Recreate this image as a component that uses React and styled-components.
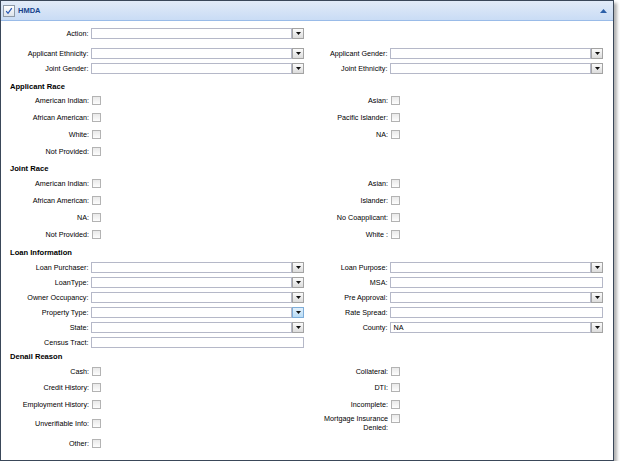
import React from 'react'
import styled, { createGlobalStyle } from 'styled-components'

const GlobalStyle = createGlobalStyle`
  html, body {
    margin: 0;
    padding: 0;
    background: #ffffff;
  }
  body {
    font-family: "Liberation Sans", Arial, sans-serif;
  }
`

const Panel = styled.section`
  width: 612px;
  border: 1px solid #3a4759;
  box-shadow: 3px 3px 3px rgba(0, 0, 0, 0.3);
  background: #fff;
`

const Header = styled.header`
  height: 19px;
  display: flex;
  align-items: center;
  padding: 0 6px 0 2px;
  background: linear-gradient(#e2ebf8, #c9dcf5);
  border-bottom: 1px solid #99bbe8;
`

const HeaderCheck = styled.span`
  width: 12px;
  height: 12px;
  box-sizing: border-box;
  border: 1px solid #8e9aa8;
  background: linear-gradient(#ffffff, #dde3ea);
  display: flex;
  align-items: center;
  justify-content: center;
  margin-right: 3px;
`

const Title = styled.span`
  flex: 1;
  font-size: 7.5px;
  font-weight: bold;
  color: #15428b;
`

const Body = styled.div`
  padding: 5px 0 8px 4px;
`

const Row = styled.div`
  display: grid;
  grid-template-columns: 299px 299px;
  height: ${(p) => p.h || 15}px;
  margin-top: ${(p) => p.mt || 0}px;
`

const Field = styled.div`
  display: flex;
  align-items: ${(p) => (p.top ? 'flex-start' : 'center')};
  padding-top: ${(p) => p.pt || 0}px;
`

const Label = styled.label`
  width: 84px;
  margin-right: 3px;
  text-align: right;
  font-size: 7.2px;
  line-height: 9px;
  color: #000;
`

const SectionTitle = styled.div`
  height: ${(p) => p.h}px;
  box-sizing: border-box;
  padding: ${(p) => p.pt}px 0 0 5px;
  font-size: 7.6px;
  font-weight: bold;
  line-height: 10px;
  color: #000;
`

const Control = styled.div`
  width: 214px;
  height: 11px;
  display: flex;
`

const TextBox = styled.div`
  flex: 1;
  box-sizing: border-box;
  height: 11px;
  border: 1px solid #b5b8c8;
  background: #fff;
  font-size: 7.2px;
  line-height: 9px;
  padding-left: 2px;
  color: #000;
`

const Trigger = styled.div`
  width: 12px;
  height: 11px;
  box-sizing: border-box;
  border: 1px solid ${(p) => (p.hover ? '#7eadd9' : '#a3a3a3')};
  background: ${(p) =>
    p.hover ? 'linear-gradient(#e3f1fc, #b9dcf6)' : 'linear-gradient(#fbfbfb, #dcdcdc)'};
  display: flex;
  align-items: center;
  justify-content: center;
`

const Check = styled.span`
  width: 9px;
  height: 9px;
  box-sizing: border-box;
  border: 1px solid #b3b3b3;
  background: linear-gradient(#e9e9e9, #fdfdfd);
  display: inline-block;
`

const Arrow = () => (
  <svg width="5" height="3" viewBox="0 0 5 3">
    <path d="M0 0h5L2.5 3z" fill="#111" />
  </svg>
)

const Combo = ({ value, hover }) => (
  <Control>
    <TextBox>{value}</TextBox>
    <Trigger hover={hover}>
      <Arrow />
    </Trigger>
  </Control>
)

const Text = ({ value }) => (
  <Control>
    <TextBox>{value}</TextBox>
  </Control>
)

const Item = ({ label, children, top, pt }) => (
  <Field top={top} pt={pt}>
    <Label>{label}</Label>
    {children}
  </Field>
)

const CheckRow = ({ left, right, h = 17 }) => (
  <Row h={h}>
    {left ? (
      <Item label={left}>
        <Check />
      </Item>
    ) : (
      <div />
    )}
    {right ? (
      <Item label={right}>
        <Check />
      </Item>
    ) : (
      <div />
    )}
  </Row>
)

export default function App() {
  return (
    <>
      <GlobalStyle />
      <Panel>
        <Header>
          <HeaderCheck>
            <svg width="8" height="8" viewBox="0 0 8 8">
              <path d="M1.2 4.2 3 6.3 6.8 1.2" stroke="#2757b5" strokeWidth="1.2" fill="none" />
            </svg>
          </HeaderCheck>
          <Title>HMDA</Title>
          <svg width="7" height="4" viewBox="0 0 7 4">
            <path d="M0 4 3.5 0 7 4z" fill="#2b5fa8" />
          </svg>
        </Header>
        <Body>
          <Row>
            <Item label="Action:">
              <Combo />
            </Item>
            <div />
          </Row>
          <Row mt={5}>
            <Item label="Applicant Ethnicity:">
              <Combo />
            </Item>
            <Item label="Applicant Gender:">
              <Combo />
            </Item>
          </Row>
          <Row>
            <Item label="Joint Gender:">
              <Combo />
            </Item>
            <Item label="Joint Ethnicity:">
              <Combo />
            </Item>
          </Row>

          <SectionTitle h={16} pt={6}>Applicant Race</SectionTitle>
          <CheckRow left="American Indian:" right="Asian:" />
          <CheckRow left="African American:" right="Pacific Islander:" />
          <CheckRow left="White:" right="NA:" />
          <CheckRow left="Not Provided:" />

          <SectionTitle h={15} pt={4}>Joint Race</SectionTitle>
          <CheckRow left="American Indian:" right="Asian:" />
          <CheckRow left="African American:" right="Islander:" />
          <CheckRow left="NA:" right="No Coapplicant:" />
          <CheckRow left="Not Provided:" right="White :" />

          <SectionTitle h={17} pt={5}>Loan Information</SectionTitle>
          <Row>
            <Item label="Loan Purchaser:">
              <Combo />
            </Item>
            <Item label="Loan Purpose:">
              <Combo />
            </Item>
          </Row>
          <Row>
            <Item label="LoanType:">
              <Combo />
            </Item>
            <Item label="MSA:">
              <Text />
            </Item>
          </Row>
          <Row>
            <Item label="Owner Occupancy:">
              <Combo />
            </Item>
            <Item label="Pre Approval:">
              <Combo />
            </Item>
          </Row>
          <Row>
            <Item label="Property Type:">
              <Combo hover />
            </Item>
            <Item label="Rate Spread:">
              <Text />
            </Item>
          </Row>
          <Row>
            <Item label="State:">
              <Combo />
            </Item>
            <Item label="County:">
              <Combo value="NA" />
            </Item>
          </Row>
          <Row>
            <Item label="Census Tract:">
              <Text />
            </Item>
            <div />
          </Row>

          <SectionTitle h={13} pt={2}>Denail Reason</SectionTitle>
          <CheckRow left="Cash:" right="Collateral:" h={16} />
          <CheckRow left="Credit History:" right="DTI:" />
          <CheckRow left="Employment History:" right="Incomplete:" h={16} />
          <Row h={23}>
            <Item label="Unverifiable Info:">
              <Check />
            </Item>
            <Item
              top
              pt={2}
              label={
                <>
                  Mortgage Insurance
                  <br />
                  Denied:
                </>
              }
            >
              <Check />
            </Item>
          </Row>
          <CheckRow left="Other:" />
        </Body>
      </Panel>
    </>
  )
}
